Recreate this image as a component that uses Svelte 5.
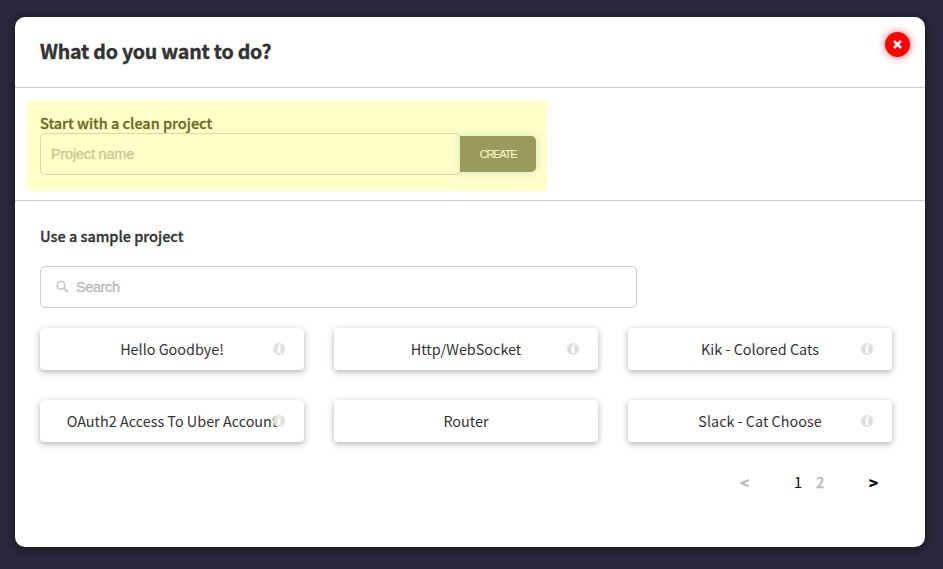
<script>
  const projects = [
    { name: 'Hello Goodbye!', info: true },
    { name: 'Http/WebSocket', info: true },
    { name: 'Kik - Colored Cats', info: true },
    { name: 'OAuth2 Access To Uber Account', info: true },
    { name: 'Router', info: false },
    { name: 'Slack - Cat Choose', info: true }
  ];
</script>

<div class="backdrop">
  <main class="dialog">
    <header>
      <h1>What do you want to do?</h1>
      <button class="close" aria-label="Close">
        <svg width="9" height="9" viewBox="0 0 9 9"><path d="M1.9 1.9 7.1 7.1M7.1 1.9 1.9 7.1" stroke="#fff" stroke-width="2.6" stroke-linecap="square" /></svg>
      </button>
    </header>

    <section class="clean">
      <div class="highlight">
        <h2>Start with a clean project</h2>
        <div class="row">
          <input class="name" placeholder="Project name" />
          <button class="create">CREATE</button>
        </div>
      </div>
    </section>

    <section class="samples">
      <h2>Use a sample project</h2>
      <label class="search">
        <svg width="13" height="13" viewBox="0 0 13 13" fill="none" stroke="#cdcdcd"><circle cx="5" cy="5.3" r="3.9" stroke-width="1.8" /><path d="m8 8.3 3.2 3.2" stroke-width="2.2" stroke-linecap="round" /></svg>
        <input placeholder="Search" />
      </label>
      <div class="grid">
        {#each projects as project}
          <div class="card">
            <span>{project.name}</span>
            {#if project.info}
              <svg class="info" width="12" height="12" viewBox="0 0 12 12"><circle cx="6" cy="6" r="6" fill="#dedfe0" /><path d="M5.5 1.5h2.3l-.2 2h-2.3zM4.5 4.1h3.1l-.5 4.4h.9l-.2 1.6H4.4l.5-4.5h-.6z" fill="#fff" /></svg>
            {/if}
          </div>
        {/each}
      </div>
      <nav>
        <span class="prev">&lt;</span>
        <span class="page">1</span>
        <span class="page other">2</span>
        <span class="next">&gt;</span>
      </nav>
    </section>
  </main>
</div>

<style>
  :global(body) { background: #2b273c; }
  * { box-sizing: border-box; }
  .backdrop { height: 569px; padding: 17px 18px 22px 15px; overflow: hidden; font-family: 'Noto Sans CJK SC', sans-serif; color: #333; }
  .dialog { height: 530px; border-radius: 10px; background: #fff; box-shadow: 0 2px 10px rgba(0, 0, 0, .5); }
  header { height: 71px; display: flex; justify-content: space-between; padding: 15px 15px 0 25px; border-bottom: 1px solid #ccc; }
  h1, h2 { margin: 0; white-space: nowrap; }
  h1 { font-size: 19.6px; line-height: 38px; font-weight: 700; letter-spacing: -.22px; -webkit-text-stroke: .4px #333; }
  h2 { font-size: 14.5px; line-height: 20px; font-weight: 500; letter-spacing: -.02px; -webkit-text-stroke: .3px currentColor; }
  .highlight h2 { color: #43432f; }
  button { border: 0; padding: 0; }
  .close { width: 25px; height: 25px; border-radius: 50%; background: #f00; box-shadow: 0 0 8px rgba(255, 0, 0, .6); display: grid; place-items: center; }
  .clean { height: 113px; padding: 12px; border-bottom: 1px solid #ccc; }
  .highlight { position: relative; width: 520px; height: 91px; padding: 13px 11px 0 13px; }
  .highlight::after { content: ''; position: absolute; inset: 0; background: rgba(255, 255, 0, .216); pointer-events: none; }
  .row { display: flex; align-items: center; }
  input { font: 14.5px 'Liberation Sans', sans-serif; letter-spacing: -.2px; color: #333; outline: 0; }
  input::placeholder { color: #b8b8b8; opacity: 1; -webkit-text-stroke: .3px #b8b8b8; }
  .name { width: 421px; height: 42px; border: 1px solid #ccc; border-radius: 5px; padding: 0 10px 1px; background: #fff; }
  .create { width: 76px; height: 36px; margin-left: -1px; border-radius: 0 5px 5px 0; background: #7f7f77; color: #fff; font: 11px 'Liberation Sans', sans-serif; letter-spacing: -1.2px; box-shadow: 0 0 8px rgba(145, 200, 220, .6); }
  .samples { padding: 25px 33px 0 25px; }
  .search { width: 597px; height: 42px; margin-top: 20px; display: flex; align-items: center; gap: 7px; padding: 0 0 1px 15px; border: 1px solid #ccc; border-radius: 5px; }
  .search input { flex: 1; border: 0; padding: 0; background: none; letter-spacing: -.4px; }
  .grid { margin-top: 20px; display: grid; grid-template-columns: repeat(3, 264px); gap: 30px; }
  .card { position: relative; height: 42px; display: flex; align-items: center; justify-content: center; padding-bottom: 1px; border-radius: 4px; box-shadow: 0 2px 6px rgba(35, 35, 55, .36); font-size: 14.4px; white-space: nowrap; }
  .info { position: absolute; right: 19px; top: 15px; }
  nav { display: flex; margin-top: 30px; padding-left: 700px; font-size: 14.5px; line-height: 20px; color: #000; }
  .prev, .next { font-size: 15.5px; font-weight: 700; -webkit-text-stroke: .3px currentColor; }
  .prev { width: 54px; color: #bbb; }
  .page { width: 22px; }
  .other { width: 53px; color: #bbb; font-weight: 500; -webkit-text-stroke: .3px #bbb; }
</style>
